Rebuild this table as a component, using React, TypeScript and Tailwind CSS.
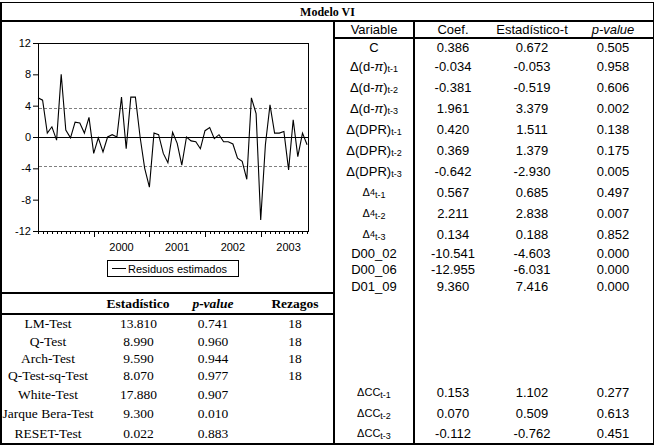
const resid = [
  5.0, 4.7, 0.5, 1.3, -0.4, 8.0, 0.9, -0.1, 1.9, 1.8, 0.5, 2.5, -2.1, -0.1,
  -1.9, 0, 0.3, 0.0, 5.1, -1.5, 5.1, 5.1, 0.0, -4.0, -6.4, 0.5, 0.3, -2.1,
  -3.3, 0.6, -0.8, -3.6, 0, -0.5, -0.6, -1.5, 0.8, 1.2, -0.2, 0.3, -0.6, -0.6,
  -0.9, -2.7, -3.1, -5.4, 5.0, 3.0, -10.6, -1.0, 4.1, 0.5, 0.5, 0.7, -4.2, 2.2,
  -2.5, 0.5, -1.0,
];

const X0 = 36;
const DX = 4.64;
const Y0 = 115;
const SY = 7.833;
const px = (i: number) => X0 + i * DX;
const py = (v: number) => Y0 - v * SY;

const ResidualChart = () => {
  const line = resid.map((v, i) => `${px(i).toFixed(1)},${py(v).toFixed(1)}`).join(" ");
  const yTicks = [12, 8, 4, 0, -4, -8, -12];
  const years = ["2000", "2001", "2002", "2003"];

  return (
    <svg width="331" height="270" className="block">
      <g fontFamily="'Liberation Sans', Arial, sans-serif" fontSize="11" fill="#000">
        {yTicks.map((t) => (
          <g key={t}>
            <line x1="31" x2="36" y1={py(t) + 0.5} y2={py(t) + 0.5} stroke="#000" />
            <text x="29" y={py(t) + 4} textAnchor="end">
              {t}
            </text>
          </g>
        ))}
        {resid.map((_, i) => (
          <line
            key={i}
            x1={Math.round(px(i)) + 0.5}
            x2={Math.round(px(i)) + 0.5}
            y1="209"
            y2={i % 12 === 0 && i > 0 ? 215 : 212}
            stroke="#000"
          />
        ))}
        {years.map((y, k) => (
          <text key={y} x={px(18 + k * 12)} y="229" textAnchor="middle">
            {y}
          </text>
        ))}
      </g>
      <rect x="36.5" y="21.5" width="270" height="188" fill="none" stroke="#000" />
      <line x1="37" x2="306" y1="86.5" y2="86.5" stroke="#808080" strokeDasharray="3 2" />
      <line x1="37" x2="306" y1="144.5" y2="144.5" stroke="#808080" strokeDasharray="3 2" />
      <line x1="37" x2="306" y1="115.5" y2="115.5" stroke="#000" />
      <polyline points={line} fill="none" stroke="#000" strokeWidth="1.1" />
      <rect x="105.5" y="238.5" width="131" height="16" fill="#fff" stroke="#000" />
      <line x1="110" x2="124" y1="246.5" y2="246.5" stroke="#000" />
      <text x="126" y="251" fontFamily="'Liberation Sans', Arial, sans-serif" fontSize="11">
        Residuos estimados
      </text>
    </svg>
  );
};

const tests = [
  { name: "LM-Test", stat: "13.810", p: "0.741", lag: "18", h: "h-[18px]" },
  { name: "Q-Test", stat: "8.990", p: "0.960", lag: "18", h: "h-[17px]" },
  { name: "Arch-Test", stat: "9.590", p: "0.944", lag: "18", h: "h-[17px]" },
  { name: "Q-Test-sq-Test", stat: "8.070", p: "0.977", lag: "18", h: "h-[18px]" },
  { name: "White-Test", stat: "17.880", p: "0.907", lag: "", h: "h-[19px]" },
  { name: "Jarque Bera-Test", stat: "9.300", p: "0.010", lag: "", h: "h-[20px]" },
  { name: "RESET-Test", stat: "0.022", p: "0.883", lag: "", h: "h-[19px]" },
];

const Sub = ({ children }: { children: React.ReactNode }) => (
  <span className="text-[9px] relative top-[3px]">{children}</span>
);

const DPi = ({ lag }: { lag: string }) => (
  <>
    Δ(d-<span className="italic">π</span>)<Sub>t-{lag}</Sub>
  </>
);

const DPR = ({ lag }: { lag: string }) => (
  <>
    Δ(DPR)<Sub>t-{lag}</Sub>
  </>
);

const D4 = ({ lag }: { lag: string }) => (
  <>
    <span className="text-[11px]">Δ</span>
    <span className="text-[9px]">4</span>
    <Sub>t-{lag}</Sub>
  </>
);

const DCC = ({ lag }: { lag: string }) => (
  <>
    <span className="text-[11px]">ΔCC</span>
    <Sub>t-{lag}</Sub>
  </>
);

const coefRows = [
  { v: <>C</>, c: "0.386", t: "0.672", p: "0.505", h: "h-[17px]" },
  { v: <DPi lag="1" />, c: "-0.034", t: "-0.053", p: "0.958", h: "h-[21px]" },
  { v: <DPi lag="2" />, c: "-0.381", t: "-0.519", p: "0.606", h: "h-[21px]" },
  { v: <DPi lag="3" />, c: "1.961", t: "3.379", p: "0.002", h: "h-[21px]" },
  { v: <DPR lag="1" />, c: "0.420", t: "1.511", p: "0.138", h: "h-[21px]" },
  { v: <DPR lag="2" />, c: "0.369", t: "1.379", p: "0.175", h: "h-[21px]" },
  { v: <DPR lag="3" />, c: "-0.642", t: "-2.930", p: "0.005", h: "h-[21px]" },
  { v: <D4 lag="1" />, c: "0.567", t: "0.685", p: "0.497", h: "h-[21px]" },
  { v: <D4 lag="2" />, c: "2.211", t: "2.838", p: "0.007", h: "h-[21px]" },
  { v: <D4 lag="3" />, c: "0.134", t: "0.188", p: "0.852", h: "h-[21px]" },
  { v: <>D00_02</>, c: "-10.541", t: "-4.603", p: "0.000", h: "h-[16px]" },
  { v: <>D00_06</>, c: "-12.955", t: "-6.031", p: "0.000", h: "h-[17px]" },
  { v: <>D01_09</>, c: "9.360", t: "7.416", p: "0.000", h: "h-[16px]" },
];

const ccRows = [
  { v: <DCC lag="1" />, c: "0.153", t: "1.102", p: "0.277", h: "h-[21px]" },
  { v: <DCC lag="2" />, c: "0.070", t: "0.509", p: "0.613", h: "h-[20px]" },
  { v: <DCC lag="3" />, c: "-0.112", t: "-0.762", p: "0.451", h: "h-[20px]" },
];

type Row = { v: React.ReactNode; c: string; t: string; p: string; h: string };

const CoefRow = ({ r }: { r: Row }) => (
  <div className={`flex ${r.h}`}>
    <div className="w-[80px] border-r-2 border-black flex items-center justify-center">{r.v}</div>
    <div className="w-[76px] flex items-center justify-center">{r.c}</div>
    <div className="w-[82px] flex items-center justify-center">{r.t}</div>
    <div className="w-[80px] flex items-center justify-center">{r.p}</div>
  </div>
);

export default function App() {
  return (
    <div className="w-[655px] h-[448px] bg-white pt-[2px] text-black">
      <div className="w-[654px] h-[443px] border-t border-l-2 border-r border-b-2 border-black flex flex-col">
        <div className="h-[19px] border-b-2 border-black flex items-center justify-center font-['Liberation_Serif',serif] font-bold text-[12px]">
          Modelo VI
        </div>
        <div className="flex flex-1">
          {/* left: chart + diagnostics */}
          <div className="w-[333px] border-r-2 border-black flex flex-col">
            <div className="h-[272px] border-b-2 border-black">
              <ResidualChart />
            </div>
            <div className="flex flex-col font-['Liberation_Serif',serif] text-[13.5px] leading-none">
              <div className="flex h-[21px] border-b-2 border-black font-bold">
                <div className="w-[90px]" />
                <div className="w-[92px] flex items-center justify-center">Estadístico</div>
                <div className="w-[58px] flex items-center justify-center italic">p-value</div>
                <div className="w-[91px] pl-[15px] flex items-center justify-center">Rezagos</div>
              </div>
              {tests.map((t) => (
                <div key={t.name} className={`flex ${t.h}`}>
                  <div className="w-[91px] pl-[1px] flex items-center justify-center whitespace-nowrap">{t.name}</div>
                  <div className="w-[91px] flex items-center justify-center">{t.stat}</div>
                  <div className="w-[58px] flex items-center justify-center">{t.p}</div>
                  <div className="w-[91px] pl-[15px] flex items-center justify-center">{t.lag}</div>
                </div>
              ))}
            </div>
          </div>
          {/* right: coefficients */}
          <div className="flex-1 flex flex-col font-['Liberation_Sans',Arial,sans-serif] text-[13px] leading-none">
            <div className="flex h-[17px] border-b-2 border-black">
              <div className="w-[80px] border-r-2 border-black flex items-center justify-center">Variable</div>
              <div className="w-[76px] flex items-center justify-center">Coef.</div>
              <div className="w-[82px] flex items-center justify-center">Estadístico-t</div>
              <div className="w-[80px] flex items-center justify-center italic">p-value</div>
            </div>
            {coefRows.map((r, i) => (
              <CoefRow key={i} r={r} />
            ))}
            <div className="flex flex-1">
              <div className="w-[80px] border-r-2 border-black" />
            </div>
            {ccRows.map((r, i) => (
              <CoefRow key={i} r={r} />
            ))}
          </div>
        </div>
      </div>
    </div>
  );
}
